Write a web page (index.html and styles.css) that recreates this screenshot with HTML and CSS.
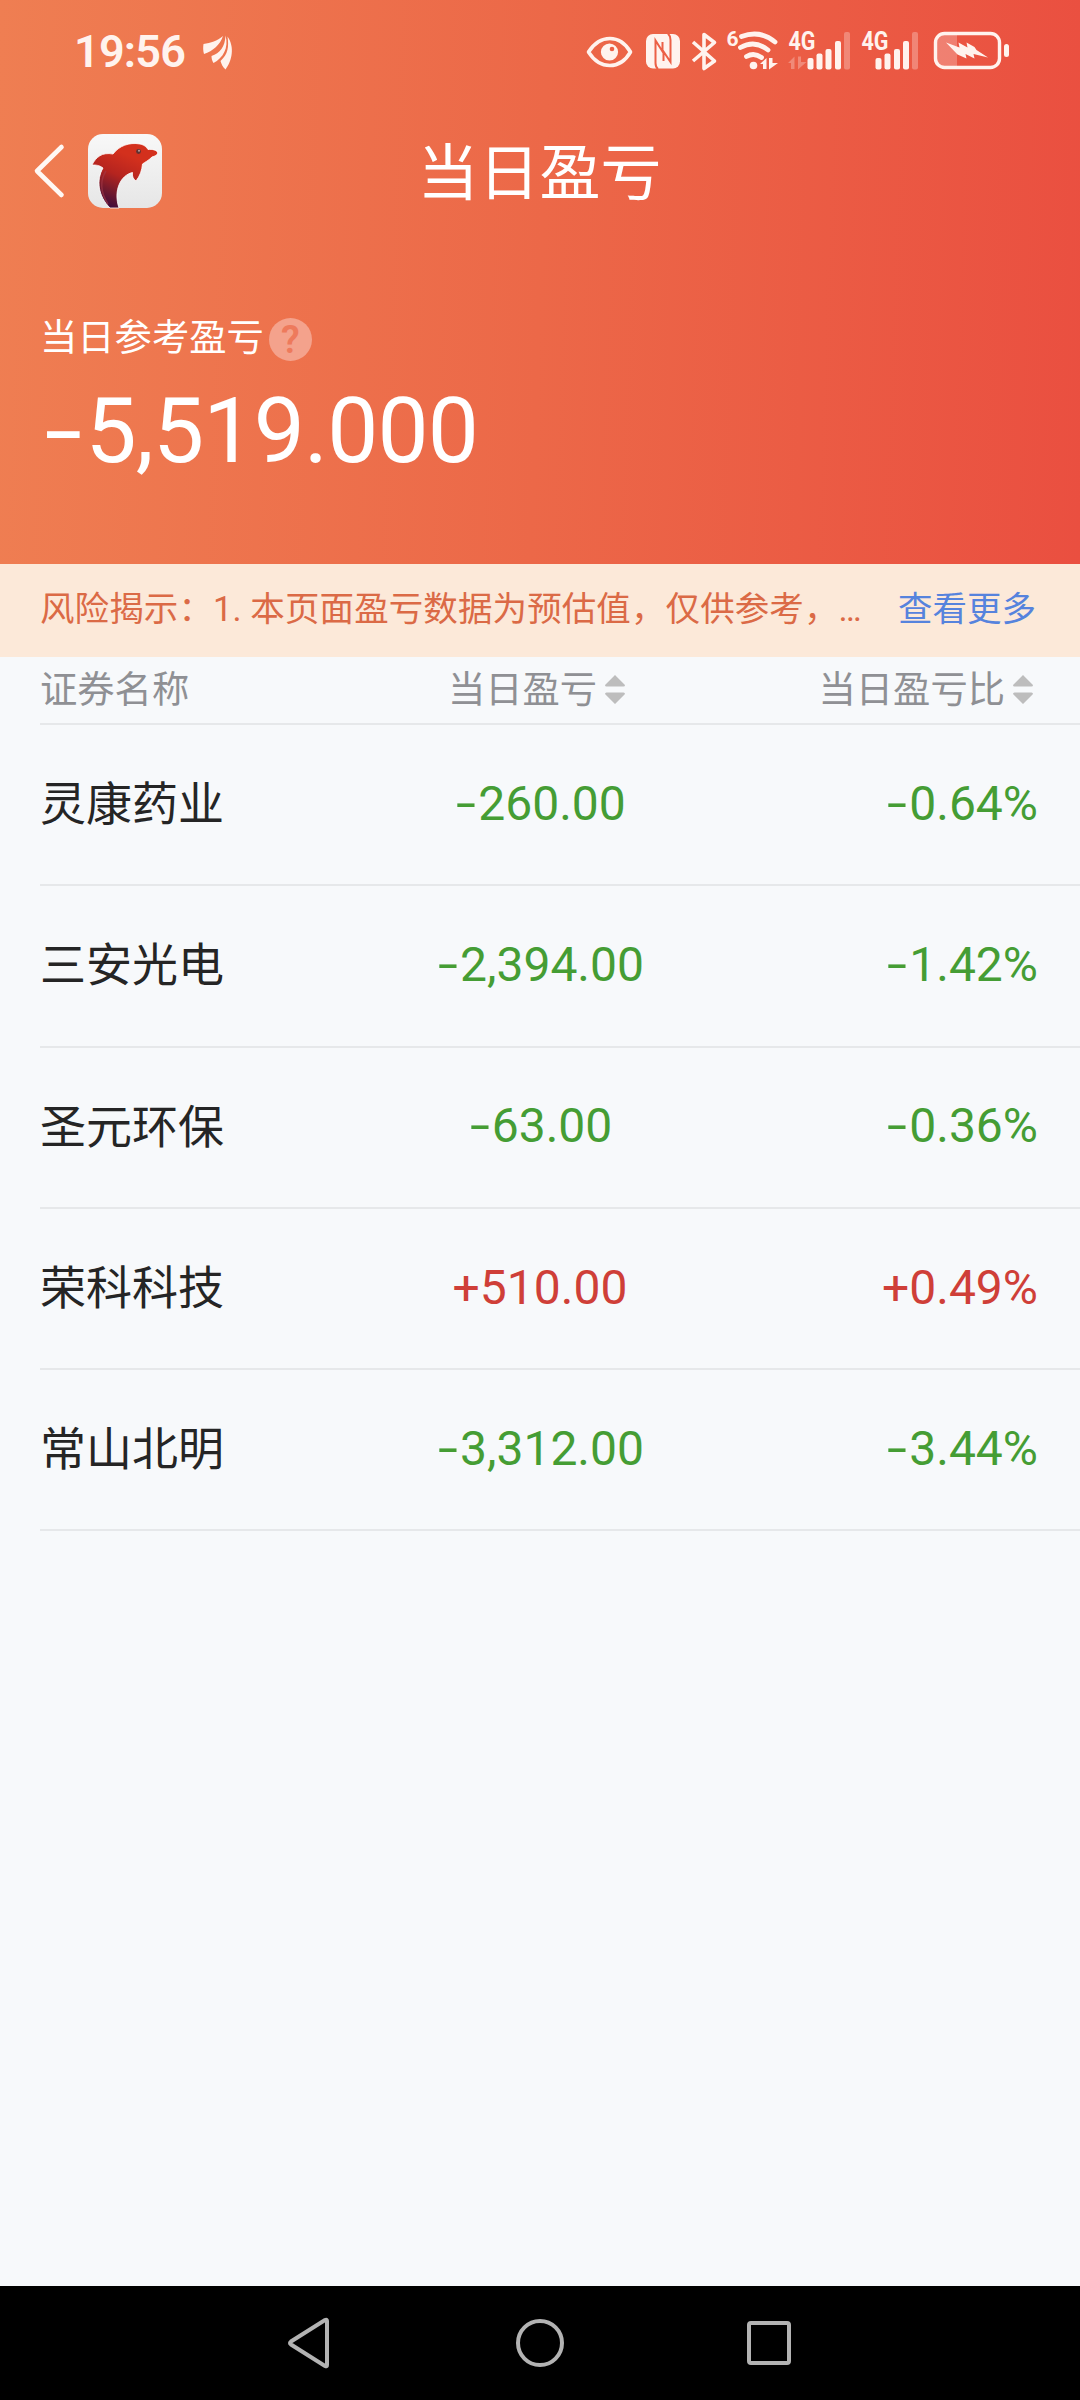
FILE: index.html
```html
<!DOCTYPE html>
<html lang="zh-CN">
<head>
  <meta charset="UTF-8" />
  <meta name="viewport" content="width=device-width, initial-scale=1.0"/>
  <title>当日盈亏</title>
  <link rel="stylesheet" href="styles.css">
</head>

<body>
  <div class="top">
    <div class="status">
      <span class="time">19:56</span>
      <svg class="leaf" width="32" height="36" viewBox="202 33 32 36" fill="#fff3ee">
        <path d="M203.500 43 C211 42 217 40 223 35 C220 44 213 50 204 53 C203 50 203 46 203.500 43Z"/>
        <path d="M225.500 34.500 C229 47 223 57 213.500 62 C212 60 211.500 57 211.500 55 C220 52 225 46 225.500 34.500Z"/>
        <path d="M227.500 35.500 C235 46 232 60 225.500 68.500 C222.500 66 221.500 63 220.500 60 C228 53 229 46 227.500 35.500Z"/>
      </svg>

      <div class="status-icons">
        <!-- eye comfort -->
        <svg width="46" height="48" viewBox="587 26 46 48">
          <path d="M588.500 52 C600 34 620 34 630.500 52 C620 70 600 70 588.500 52Z" fill="none" stroke="#fff3ee" stroke-width="3.600" stroke-linejoin="round"/>
          <circle cx="609.500" cy="52" r="8.600" fill="#fff3ee"/>
          <circle cx="612" cy="49" r="2.300" fill="#ec6046"/>
        </svg>
        <!-- nfc -->
        <svg class="nfc" width="35" height="48" viewBox="646 26 35 48">
          <rect x="646" y="34" width="34" height="34.500" rx="7" fill="#fff3ee"/>
          <path d="M658 69 Q655.500 67 655.500 63 V40.500 L663.500 53 V61 M668 33.500 Q670.500 36 670.500 40 V62 L662.500 50 V42" fill="none" stroke="#ec6046" stroke-width="2"/>
        </svg>
        <!-- bluetooth -->
        <svg class="bt" width="27" height="48" viewBox="691 26 27 48">
          <path d="M693 42 L714.500 61 L704 68.500 V34.500 L714.500 42.500 L693 61" fill="none" stroke="#fff3ee" stroke-width="3.600" stroke-linejoin="round"/>
        </svg>
        <!-- wifi 6 -->
        <svg class="wifi" width="53" height="48" viewBox="726 26 53 48">
          <text class="wifi-gen" x="726.500" y="46">6</text>
          <g fill="none" stroke="#fff3ee" stroke-width="4.800" stroke-linecap="round">
            <path d="M741.500 36.500 Q760 29.500 775 42"/>
            <path d="M740.500 47.500 Q755 39.500 768 50"/>
            <path d="M746.500 56.500 Q754 52 761.500 57.500"/>
          </g>
          <circle cx="753.500" cy="65.500" r="3.800" fill="#fff3ee"/>
          <path d="M760 64 L766.500 58 V69 H763 V64Z M769 58 H772.500 V63 H778 L769 69.500Z" fill="#fff3ee"/>
        </svg>
        <!-- sim 1 -->
        <svg class="sim1" width="64" height="48" viewBox="787 26 64 48">
          <text class="net" x="788.500" y="50" textLength="27" lengthAdjust="spacingAndGlyphs">4G</text>
          <path d="M788 63 L794.500 56.500 V69 H791 V63Z M798 56.500 H801 V62 H806.500 L798 69.500Z" fill="#fff" opacity="0.28"/>
          <g fill="#fff3ee">
            <rect x="807.500" y="58" width="6" height="11.500" rx="2"/>
            <rect x="816.500" y="53.500" width="6" height="16" rx="2"/>
            <rect x="825.500" y="49" width="6" height="20.500" rx="2"/>
            <rect x="835" y="41" width="6" height="28.500" rx="2"/>
            <rect x="844" y="32" width="6" height="37.500" rx="2" opacity="0.3"/>
          </g>
        </svg>
        <!-- sim 2 -->
        <svg class="sim2" width="58" height="48" viewBox="861 26 58 48">
          <text class="net" x="861.500" y="50" textLength="27" lengthAdjust="spacingAndGlyphs">4G</text>
          <g fill="#fff3ee">
            <rect x="875.500" y="58" width="6" height="11.500" rx="2"/>
            <rect x="884.500" y="53.500" width="6" height="16" rx="2"/>
            <rect x="894" y="49" width="6" height="20.500" rx="2"/>
            <rect x="903" y="41" width="6" height="28.500" rx="2"/>
            <rect x="912" y="32" width="6" height="37.500" rx="2" opacity="0.3"/>
          </g>
        </svg>
        <!-- battery -->
        <svg class="battery" width="77" height="48" viewBox="933 26 77 48">
          <path d="M957 34 H942 Q936 34 936 41 V60 Q936 67 942 67 H957Z" fill="#fff" opacity="0.25"/>
          <rect x="935.500" y="33.500" width="64" height="34" rx="9" fill="none" stroke="#fff3ee" stroke-width="3.400"/>
          <rect x="1004" y="44" width="5" height="13" rx="2.500" fill="#fff3ee"/>
          <path d="M946 42.500 L959.500 47.500 L958.500 42.500 L967.500 47.500 L966.500 42.500 L974.500 47 L976.500 50 L988 57.500 L973.500 54 L974.500 58.500 L965.500 54 L966.500 58.500 L957.500 54.500Z" fill="#fff3ee"/>
        </svg>
      </div>
    </div>

    <header>
      <svg class="back" width="34" height="56" viewBox="32 143 34 56">
        <path d="M61.500 147 L37 171 L61.500 195" fill="none" stroke="#fff8f4" stroke-width="4.600" stroke-linecap="round" stroke-linejoin="round"/>
      </svg>
      <svg class="app-logo" viewBox="0 0 74 74">
        <defs>
          <linearGradient id="tile" x1="0" y1="0" x2="0" y2="1">
            <stop offset="0" stop-color="#f8f8f8"/>
            <stop offset="1" stop-color="#e6e6e6"/>
          </linearGradient>
          <linearGradient id="dolphin" x1="0.600" y1="0.200" x2="0.250" y2="1">
            <stop offset="0" stop-color="#d3301d"/>
            <stop offset="0.400" stop-color="#b5241f"/>
            <stop offset="0.700" stop-color="#741a2c"/>
            <stop offset="1" stop-color="#3d0a3c"/>
          </linearGradient>
        </defs>
        <rect width="74" height="74" rx="15" fill="url(#tile)"/>
        <path d="M4 31 C8 23 14 18 25 20 C31 12 41 8 52 10 C57 11 59 14 60 15.500 C64 15 69 16 69.500 18.500 C70 21 67 22 64 23 C60 27 57 28 54.500 30 C54 36 52 42 48 47 C45 45 44 42 44.500 38.500 C33 41 25 56 31 74 L22 74 C10 62 8 46 15 34 C11 31 8 31 4 31Z" fill="url(#dolphin)" stroke="#fff" stroke-width="0.800"/>
        <path d="M20 70 C12 58 12 46 18 37" fill="none" stroke="#a33b48" stroke-width="1.500" opacity="0.600"/>
        <circle cx="50.500" cy="17.500" r="2.400" fill="#5f3232"/>
        <circle cx="51" cy="16.800" r="1" fill="#b9a09d"/>
      </svg>
      <h1>当日盈亏</h1>
    </header>

    <div class="summary">
      <div class="label">当日参考盈亏<span class="help">?</span></div>
      <div class="amount"><span class="sign">-</span>5,519.000</div>
    </div>
  </div>

  <div class="notice">
    <p>风险揭示：1. 本页面盈亏数据为预估值，仅供参考，…</p>
    <a href="#">查看更多</a>
  </div>

  <main>
    <div class="row head">
      <span>证券名称</span>
      <span class="profit">当日盈亏<svg class="sort" viewBox="0 0 20 29"><path d="M10 0 L20 10 Q20 11.500 18.500 11.500 H1.500 Q0 11.500 0 10Z M10 29 L20 19 Q20 17.500 18.500 17.500 H1.500 Q0 17.500 0 19Z"/></svg></span>
      <span class="ratio">当日盈亏比<svg class="sort" viewBox="0 0 20 29"><path d="M10 0 L20 10 Q20 11.500 18.500 11.500 H1.500 Q0 11.500 0 10Z M10 29 L20 19 Q20 17.500 18.500 17.500 H1.500 Q0 17.500 0 19Z"/></svg></span>
    </div>
    <div class="row down">
      <span class="name">灵康药业</span>
      <span class="profit"><span class="sign">-</span>260.00</span>
      <span class="ratio"><span class="sign">-</span>0.64%</span>
    </div>
    <div class="row down">
      <span class="name">三安光电</span>
      <span class="profit"><span class="sign">-</span>2,394.00</span>
      <span class="ratio"><span class="sign">-</span>1.42%</span>
    </div>
    <div class="row down">
      <span class="name">圣元环保</span>
      <span class="profit"><span class="sign">-</span>63.00</span>
      <span class="ratio"><span class="sign">-</span>0.36%</span>
    </div>
    <div class="row up">
      <span class="name">荣科科技</span>
      <span class="profit">+510.00</span>
      <span class="ratio">+0.49%</span>
    </div>
    <div class="row down">
      <span class="name">常山北明</span>
      <span class="profit"><span class="sign">-</span>3,312.00</span>
      <span class="ratio"><span class="sign">-</span>3.44%</span>
    </div>
  </main>

  <nav>
    <svg width="50" height="60" viewBox="0 0 50 60"><path d="M41 8 V52 Q41 54 39 53 L5 31.500 Q3 30 5 28.500 L39 7 Q41 6 41 8Z"/></svg>
    <svg width="50" height="60" viewBox="0 0 50 60"><circle cx="25" cy="30" r="22"/></svg>
    <svg width="50" height="60" viewBox="0 0 50 60"><rect x="5" y="10" width="40" height="40" rx="2"/></svg>
  </nav>
</body>
</html>
```

FILE: styles.css
```css
* {margin: 0; padding: 0; box-sizing: border-box;}
body {
  height: 2400px;
  display: flex;
  flex-direction: column;
  font-family: Roboto, "Noto Sans CJK SC", sans-serif;
  background: #f7f9fb;
  color: #252525;
  overflow-x: hidden;
}
svg {
  display: block;
  flex: none;
  overflow: visible;
}

.top {
  height: 564px;
  background: linear-gradient(92deg, #ef7e52 0%, #ec6848 50%, #ea4f40 100%);
  color: #fff;
}

.status {
  height: 104px;
  padding: 0 70px 0 74px;
  display: flex;
  align-items: center;
}
.time {
  width: 128px;
  font-size: 45px;
  font-weight: 600;
  line-height: 104px;
  letter-spacing: -0.8px;
  color: #fff3ee;
}
.status-icons {
  margin-left: auto;
  height: 104px;
  padding-bottom: 4px;
  display: flex;
  align-items: center;
}
.nfc { margin-left: 13px; }
.bt { margin-left: 10px; }
.wifi { margin-left: 8px; }
.sim1 { margin-left: 8px; }
.sim2 { margin-left: 10px; }
.battery { margin-left: 14px; }
.wifi-gen {
  font-size: 21px;
  font-weight: 700;
  fill: #fff3ee;
}
.net {
  font-size: 25px;
  font-weight: 700;
  fill: #fff3ee;
}

header {
  height: 134px;
  padding-left: 32px;
  display: grid;
  grid-template-columns: 56px 74px 1fr;
  align-items: center;
}
.app-logo {
  width: 74px;
  height: 74px;
}
header h1 {
  padding: 6px 163px 0 0;
  text-align: center;
  font-size: 61px;
  font-weight: 400;
  line-height: 128px;
}

.summary {
  padding: 72px 40px 0;
}
.label {
  height: 58px;
  display: flex;
  align-items: center;
  font-size: 37.3px;
  line-height: 50px;
  padding-bottom: 3px;
}
.help {
  width: 43px;
  height: 43px;
  margin: 3px 0 0 5px;
  border-radius: 50%;
  background: #f4a28c;
  color: #ee7a5c;
  font-size: 38px;
  font-weight: 600;
  line-height: 44px;
  text-align: center;
}
.amount {
  height: 120px;
  padding-top: 3px;
  font-size: 91px;
  font-weight: 400;
  line-height: 120px;
  letter-spacing: -0.8px;
}
/* widened minus for the figures */
.sign {
  display: inline-block;
  width: 0.5em;
  text-align: center;
  transform: scaleX(1.5);
}

.notice {
  height: 93px;
  padding: 0 44px 9px 40px;
  display: flex;
  align-items: center;
  justify-content: space-between;
  background: #fce9d9;
  font-size: 34.5px;
  white-space: nowrap;
}
.notice p {
  color: #db6a46;
  letter-spacing: 0.1px;
}
.notice a {
  color: #5683dd;
  text-decoration: none;
}

main {
  flex: 1;
  padding-left: 40px;
}
.row {
  height: 161.3px;
  padding: 0 42px 3px 0;
  display: grid;
  grid-template-columns: 320px 360px 1fr;
  align-items: center;
  border-bottom: 2px solid #e6e8ea;
  font-size: 48px;
}
.row .name {
  padding-bottom: 6px;
  font-size: 46px;
}
.profit { text-align: center; }
.ratio { text-align: right; }
.down .profit, .down .ratio { color: #459d34; }
.up .profit, .up .ratio { color: #cf3f38; }

.head {
  height: 68px;
  padding-bottom: 6px;
  color: #8f9094;
  font-size: 37.3px;
}
.head .profit, .head .ratio {
  display: flex;
  align-items: center;
  justify-content: center;
}
.head .profit {
  padding-right: 7px;
}
.head .ratio {
  justify-content: flex-end;
  padding-right: 5px;
}
.sort {
  width: 20px;
  height: 29px;
  margin: 5px 0 0 8px;
  fill: #bdbdbd;
}

nav {
  height: 114px;
  padding: 0 286px;
  display: flex;
  align-items: center;
  justify-content: space-between;
  background: #000;
}
nav svg {
  fill: none;
  stroke: #b3b3b3;
  stroke-width: 4;
}
```
